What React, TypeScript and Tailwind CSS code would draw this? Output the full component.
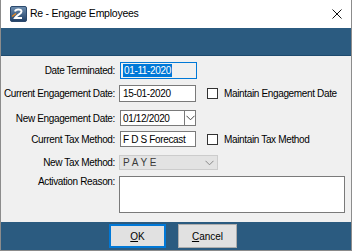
import React from "react";

function AppIcon() {
  return (
    <svg width="17" height="16" viewBox="0 0 17 16">
      <defs>
        <linearGradient id="g" x1="0" y1="0" x2="0" y2="1">
          <stop offset="0" stopColor="#6f8fb0" />
          <stop offset="1" stopColor="#1f3f66" />
        </linearGradient>
      </defs>
      <rect x="0.5" y="0.5" width="16" height="15" rx="1.5" fill="url(#g)" stroke="#2c4a6e" />
      <path d="M5 5.5 C5.5 3 11.5 2.5 11.5 5.5 C11.5 8 7 8.8 5 12 L12 12" fill="none" stroke="#fff" strokeWidth="2" />
      <path d="M2 10.5 L6 7.5" stroke="#f08a1c" strokeWidth="1.4" />
    </svg>
  );
}

function Chevron({ color = "#444" }: { color?: string }) {
  return (
    <svg width="9" height="6" viewBox="0 0 9 6">
      <path d="M0.5 0.8 L4.5 4.8 L8.5 0.8" fill="none" stroke={color} strokeWidth="1" />
    </svg>
  );
}

function Label({ children }: { children: React.ReactNode }) {
  return <div className="w-[117px] shrink-0 whitespace-nowrap pr-[3px] text-right">{children}</div>;
}

function Check({ label }: { label: string }) {
  return (
    <div className="ml-[11px] flex items-center gap-[6px] whitespace-nowrap">
      <div className="h-[11px] w-[11px] border border-[#333] bg-white" />
      <span>{label}</span>
    </div>
  );
}

export default function App() {
  return (
    <div
      className="flex h-[251px] w-[352px] flex-col border-x border-b border-[#8c8c8c] bg-[#f0f0f0] text-[10px] tracking-[-0.35px] text-black"
      style={{ fontFamily: '"Liberation Sans", Arial, sans-serif' }}
    >
      {/* Title bar */}
      <div className="flex h-[28px] shrink-0 items-center bg-white pl-[9px] pr-[9px]">
        <AppIcon />
        <span className="ml-[3px] text-[10.5px] tracking-[-0.25px]">Re - Engage Employees</span>
        <svg className="ml-auto" width="10" height="10" viewBox="0 0 10 10">
          <path d="M0.5 0.5 L9.5 9.5 M9.5 0.5 L0.5 9.5" stroke="#111" strokeWidth="1" />
        </svg>
      </div>

      {/* Header band */}
      <div className="h-[28px] shrink-0 border-b border-[#1d4a6e] bg-[#2b5b80]" />

      {/* Form */}
      <div className="flex flex-1 flex-col pt-[6px]">
        <div className="flex h-[17px] items-center">
          <Label>Date Terminated:</Label>
          <div className="ml-[2px] flex h-[17px] w-[77px] items-center border border-[#0078d7] bg-[#f0f0f0] pl-[2px]">
            <span className="bg-[#0078d7] px-px leading-[13px] text-white">01-11-2020</span>
          </div>
        </div>

        <div className="mt-[6px] flex h-[17px] items-center">
          <Label>Current Engagement Date:</Label>
          <div className="ml-[1px] flex h-[17px] w-[77px] items-center border border-[#7a7a7a] bg-white pl-[3px]">
            15-01-2020
          </div>
          <Check label="Maintain Engagement Date" />
        </div>

        <div className="mt-[8px] flex h-[16px] items-center">
          <Label>New Engagement Date:</Label>
          <div className="ml-[2px] flex h-[16px] w-[76px] items-center border border-[#7a7a7a] bg-white">
            <span className="flex-1 pl-[2px]">01/12/2020</span>
            <div className="flex h-full w-[11px] items-center justify-center border-l border-[#7a7a7a]">
              <Chevron />
            </div>
          </div>
        </div>

        <div className="mt-[5px] flex h-[16px] items-center">
          <Label>Current Tax Method:</Label>
          <div className="ml-[2px] flex h-[16px] w-[76px] items-center whitespace-nowrap border border-[#7a7a7a] bg-white pl-[2px]">
            F D S Forecast
          </div>
          <Check label="Maintain Tax Method" />
        </div>

        <div className="mt-[8px] flex h-[15px] items-center">
          <Label>New Tax Method:</Label>
          <div className="ml-[1px] flex h-[15px] w-[99px] items-center border border-[#cccccc] bg-[#e3e3e3] pl-[3px] text-[#3a3a3a]">
            <span className="flex-1 tracking-normal">P A Y E</span>
            <div className="pr-[3px]">
              <Chevron color="#888" />
            </div>
          </div>
        </div>

        <div className="mt-[6px] flex items-start">
          <Label>
            <span className="relative top-[-2px]">Activation Reason:</span>
          </Label>
          <div className="ml-[1px] h-[37px] w-[226px] border border-[#7a7a7a] bg-white" />
        </div>
      </div>

      {/* Footer */}
      <div className="flex h-[28px] shrink-0 items-center bg-[#2b5b80] pl-[108px] tracking-normal">
        <button className="flex h-[24px] w-[57px] items-center justify-center border-2 border-[#0078d7] bg-[#e1e1e1]">
          <span><span className="underline">O</span>K</span>
        </button>
        <button className="ml-[12px] flex h-[24px] w-[59px] items-center justify-center border border-[#adadad] bg-[#e1e1e1]">
          <span><span className="underline">C</span>ancel</span>
        </button>
      </div>
    </div>
  );
}
